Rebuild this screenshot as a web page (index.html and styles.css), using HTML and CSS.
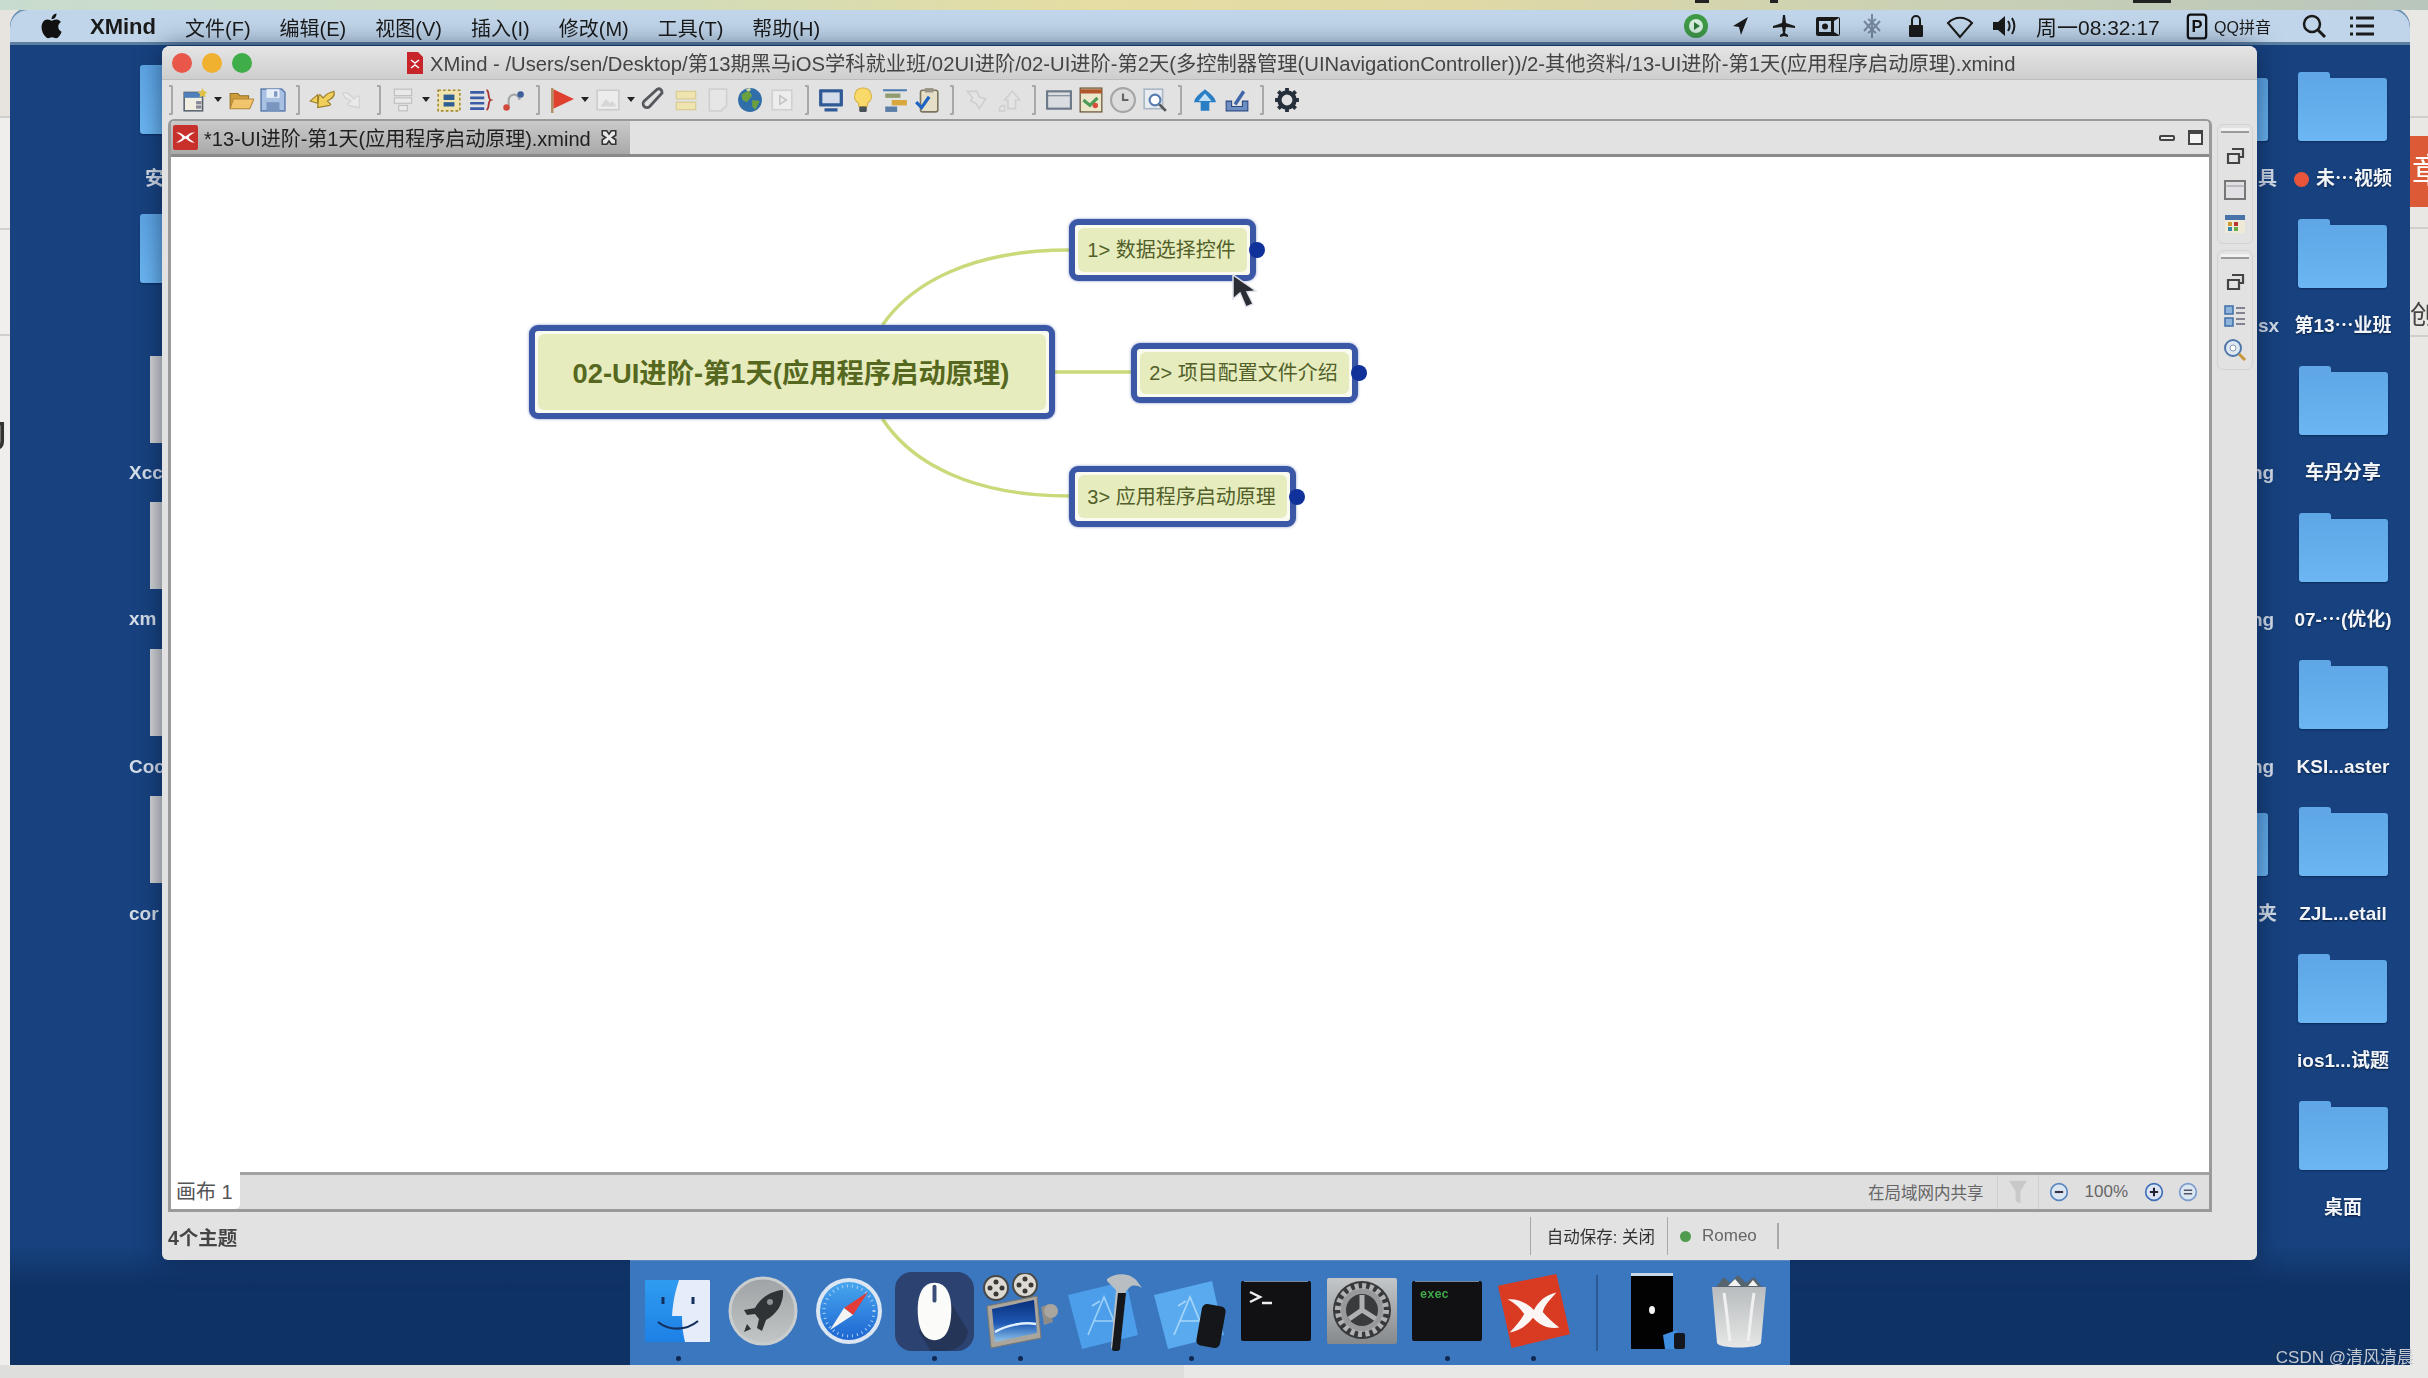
FILE: index.html
```html
<!DOCTYPE html>
<html lang="zh">
<head>
<meta charset="utf-8">
<title>XMind</title>
<link rel="stylesheet" href="styles.css">
</head>
<body>
<div class="frame">
  <div class="topstrip"><i class="blob b1"></i><i class="blob b2"></i><i class="blob b3"></i></div>
  <div class="midrow">
    <aside class="leftstrip"><span class="leftglyph">J</span></aside>
    <main class="screen">
      <header class="menubar">
        <svg class="apple" viewBox="0 0 24 24"><path fill="#111" d="M17.05 12.54c-.03-2.5 2.04-3.7 2.13-3.76-1.16-1.7-2.97-1.93-3.61-1.96-1.54-.16-3 .9-3.78.9-.78 0-1.98-.88-3.25-.86-1.67.03-3.21.97-4.07 2.47-1.74 3.01-.44 7.47 1.25 9.92.83 1.2 1.81 2.54 3.1 2.49 1.25-.05 1.72-.8 3.22-.8 1.5 0 1.93.8 3.25.78 1.34-.03 2.19-1.22 3.01-2.42.95-1.39 1.34-2.73 1.36-2.8-.03-.01-2.61-1-2.64-3.97zM14.58 5.2c.68-.83 1.14-1.98 1.02-3.13-.98.04-2.18.66-2.88 1.48-.63.73-1.19 1.9-1.04 3.03 1.1.08 2.22-.56 2.9-1.38z"/></svg>
        <b class="appname">XMind</b>
        <nav class="menus"><span>文件(F)</span><span>编辑(E)</span><span>视图(V)</span><span>插入(I)</span><span>修改(M)</span><span>工具(T)</span><span>帮助(H)</span></nav>
        <div class="tray">
          <svg class="ti" viewBox="0 0 28 28"><circle cx="14" cy="14" r="12" fill="#3f9a45"/><circle cx="14" cy="14" r="7" fill="#d8efe0"/><path d="M12 10l6 4-6 4z" fill="#2d7a38"/></svg>
          <svg class="ti" viewBox="0 0 28 28"><path d="M22 5L7 14l6 1 2 8z" fill="#1a1a1a"/></svg>
          <svg class="ti" viewBox="0 0 28 28"><path d="M13 3h2l1 8 9 3v2l-9-1-1 6 3 2v2l-4-1-4 1v-2l3-2-1-6-9 1v-2l9-3z" fill="#1a1a1a"/></svg>
          <svg class="ti" viewBox="0 0 28 28"><rect x="2" y="5" width="24" height="19" rx="2" fill="#1a1a1a"/><rect x="5" y="9" width="12" height="11" fill="#c0d5e9"/><circle cx="11" cy="14.500" r="3" fill="#1a1a1a"/><path d="M20 9l5-3v17l-5-3z" fill="#c0d5e9"/></svg>
          <svg class="ti" viewBox="0 0 28 28"><path d="M14 2v24M6 9l8 9-4 3M22 9l-8 9 4 3M6 19l8-9-4-3M22 19l-8-9 4-3" fill="none" stroke="#75899c" stroke-width="2"/></svg>
          <svg class="ti" viewBox="0 0 28 28"><path d="M10 13V8a4 4 0 018 0v5" fill="none" stroke="#1a1a1a" stroke-width="2"/><rect x="7" y="13" width="14" height="12" rx="1" fill="#1a1a1a"/></svg>
          <svg class="ti" viewBox="0 0 28 28"><path d="M14 25L2 11c7-7 17-7 24 0z" fill="none" stroke="#1a1a1a" stroke-width="2"/></svg>
          <svg class="ti" viewBox="0 0 28 28"><path d="M3 10h5l7-6v20l-7-6H3z" fill="#1a1a1a"/><path d="M18 9c2 3 2 7 0 10M22 6c3 5 3 11 0 16" fill="none" stroke="#1a1a1a" stroke-width="2"/></svg>
          <span class="clock">周一08:32:17</span>
          <svg class="ti ime" viewBox="0 0 24 28"><rect x="2" y="1" width="20" height="26" rx="3" fill="none" stroke="#111" stroke-width="2.500"/><text x="12" y="20" class="imeletter">P</text></svg>
          <span class="imename">QQ拼音</span>
          <svg class="ti search" viewBox="0 0 28 28"><circle cx="12" cy="12" r="8" fill="none" stroke="#1a1a1a" stroke-width="2.500"/><path d="M18 18l7 7" stroke="#1a1a1a" stroke-width="3"/></svg>
          <svg class="ti list" viewBox="0 0 28 28"><path d="M8 6h18M8 14h18M8 22h18" stroke="#1a1a1a" stroke-width="3"/><path d="M2 6h3M2 14h3M2 22h3" stroke="#1a1a1a" stroke-width="3"/></svg>
        </div>
      </header>

      <section class="desktop">
        <div class="deskicon" style="--x:130px;--y:20px"><i class="folder"></i></div>
        <div class="deskicon" style="--x:130px;--y:169px"><i class="folder"></i></div>
        <div class="paper" style="--x:140px;--y:311px"></div>
        <div class="paper" style="--x:140px;--y:457px"></div>
        <div class="paper" style="--x:140px;--y:604px"></div>
        <div class="paper" style="--x:140px;--y:751px"></div>
        <span class="stub" style="--x:135px;--y:122px">安</span>
        <span class="stub" style="--x:119px;--y:416px">Xcc</span>
        <span class="stub" style="--x:119px;--y:562px">xm</span>
        <span class="stub" style="--x:119px;--y:710px">Coc</span>
        <span class="stub" style="--x:119px;--y:857px">cor</span>

        <div class="deskicon" style="--x:2169px;--y:27px"><i class="folder"></i></div>
        <div class="deskicon" style="--x:2169px;--y:762px"><i class="folder"></i></div>
        <span class="stub" style="--x:2248px;--y:122px">具</span>
        <span class="stub" style="--x:2248px;--y:269px">sx</span>
        <span class="stub" style="--x:2241px;--y:416px">ng</span>
        <span class="stub" style="--x:2241px;--y:563px">ng</span>
        <span class="stub" style="--x:2241px;--y:710px">ng</span>
        <span class="stub" style="--x:2248px;--y:857px">夹</span>

        <div class="foldercol">
          <div class="fitem"><i class="folder"></i><span class="flabel"><i class="reddot"></i>未⋯视频</span></div>
          <div class="fitem"><i class="folder"></i><span class="flabel">第13⋯业班</span></div>
          <div class="fitem"><i class="folder"></i><span class="flabel">车丹分享</span></div>
          <div class="fitem"><i class="folder"></i><span class="flabel">07-⋯(优化)</span></div>
          <div class="fitem"><i class="folder"></i><span class="flabel">KSI...aster</span></div>
          <div class="fitem"><i class="folder"></i><span class="flabel">ZJL...etail</span></div>
          <div class="fitem"><i class="folder"></i><span class="flabel">ios1...试题</span></div>
          <div class="fitem"><i class="folder"></i><span class="flabel">桌面</span></div>
        </div>

        <article class="window">
          <div class="titlebar">
            <span class="lights"><i class="light red"></i><i class="light yellow"></i><i class="light green"></i></span>
            <svg class="docicon" viewBox="0 0 18 24"><path d="M1 1h11l5 5v17H1z" fill="#c8252a"/><path d="M5 9l4 3 4-3M5 17l4-3 4 3" stroke="#fff" stroke-width="1.500" fill="none"/></svg>
            <span class="titletext">XMind - /Users/sen/Desktop/第13期黑马iOS学科就业班/02UI进阶/02-UI进阶-第2天(多控制器管理(UINavigationController))/2-其他资料/13-UI进阶-第1天(应用程序启动原理).xmind</span>
          </div>

          <div class="toolbar">
            <i class="sep"></i>
            <span class="tb"><svg viewBox="0 0 24 24"><rect x="2" y="5" width="17" height="17" fill="#f0eee0" stroke="#55606c" stroke-width="1.400"/><rect x="2" y="5" width="17" height="5" fill="#4f80bc"/><rect x="13" y="13" width="5" height="3" fill="#889"/><rect x="13" y="17" width="5" height="3" fill="#889"/><path d="M19 1l1.500 3 3 .5-2.200 2.200.5 3-2.800-1.500-2.800 1.500.5-3-2.200-2.200 3-.5z" fill="#e0c24a"/></svg></span><i class="ar"></i>
            <span class="tb"><svg viewBox="0 0 24 24"><path d="M2 6h7l2 2h8v11H2z" fill="#cf9c3a" stroke="#93702a"/><path d="M5 11h19l-4 9H2z" fill="#f2c46c" stroke="#b5883a"/></svg></span>
            <span class="tb"><svg viewBox="0 0 24 24"><path d="M1 2h19l3 3v17H1z" fill="#a8c0e2" stroke="#6684b4" stroke-width="1.500"/><rect x="6" y="2" width="12" height="8" fill="#e8eef8"/><rect x="6" y="14" width="12" height="8" fill="#7a96c0"/><rect x="13" y="4" width="3" height="5" fill="#7a96c0"/></svg></span>
            <i class="sep"></i>
            <span class="tb"><svg viewBox="0 0 24 24"><path d="M23 3c-2 1-5 1-7 3l-3 3-3-3-1 1-1 11 11-2 1-1-3-3 3-2c3-2 4-4 3-7z" fill="#f0cf5a" stroke="#9c7f2a" stroke-width="1.100" transform="matrix(1 0 0 1 0 1)"/><path d="M1 13l7-6v8z" fill="#f0cf5a" stroke="#9c7f2a"/></svg></span>
            <span class="tb off"><svg viewBox="0 0 24 24"><path d="M2 5c3 0 5 1 7 3l3 3 3-3 2 1 0 10-10-2-1-1 3-3-3-2C3 10 2 8 2 5z" fill="#e9e9e9" stroke="#d2d2d2" stroke-width="1.200"/></svg></span>
            <i class="sep"></i>
            <span class="tb off"><svg viewBox="0 0 24 24"><rect x="4" y="2" width="16" height="6" fill="#e9e9e9" stroke="#bcbcbc"/><rect x="4" y="10" width="16" height="5" fill="#e9e9e9" stroke="#bcbcbc"/><rect x="8" y="17" width="8" height="5" fill="#e9e9e9" stroke="#bcbcbc"/></svg></span><i class="ar"></i>
            <span class="tb"><svg viewBox="0 0 24 24"><rect x="2" y="3" width="20" height="19" fill="#f0e3ae" stroke="#a58b30" stroke-width="1.500" stroke-dasharray="2.500 2"/><rect x="7" y="7" width="10" height="5" fill="#2f5e92"/><rect x="7" y="14" width="10" height="4" fill="#2f5e92"/></svg></span>
            <span class="tb"><svg viewBox="0 0 24 24"><path d="M2 5h13M2 10h13M2 15h13M2 20h13" stroke="#3a5ca8" stroke-width="2.500"/><path d="M17 3c3 0 1 8 4 9-3 1-1 9-4 9" fill="none" stroke="#a33" stroke-width="1.700"/></svg></span>
            <span class="tb"><svg viewBox="0 0 24 24"><path d="M8 20V12a5 5 0 0110 0" fill="none" stroke="#a5a8aa" stroke-width="2"/><circle cx="6" cy="19" r="3" fill="#d24a3c"/><circle cx="19" cy="7" r="3" fill="#3f5f98"/></svg></span>
            <i class="sep"></i>
            <span class="tb"><svg viewBox="0 0 24 24"><path d="M4 2l19 9-19 9z" fill="#e0412e"/><path d="M3 1v23" stroke="#b08a62" stroke-width="2.200"/></svg></span><i class="ar"></i>
            <span class="tb off"><svg viewBox="0 0 24 24"><rect x="2" y="3" width="20" height="18" fill="#ececec" stroke="#cdcdcd" stroke-width="1.500"/><path d="M5 18l5-7 4 4 2-2 4 5z" fill="#d6d6d6"/></svg></span><i class="ar"></i>
            <span class="tb"><svg viewBox="0 0 24 24"><path d="M20 5L8 18a3.500 3.500 0 01-5-5L15 2a3 3 0 014 4L8 18" fill="none" stroke="#55585c" stroke-width="2.600"/></svg></span>
            <span class="tb off"><svg viewBox="0 0 24 24"><rect x="3" y="4" width="18" height="7" fill="#efe3b0" stroke="#d9c98e"/><rect x="3" y="14" width="18" height="7" fill="#efe3b0" stroke="#d9c98e"/></svg></span>
            <span class="tb off"><svg viewBox="0 0 24 24"><path d="M4 2h16v15l-5 5H4z" fill="#e6e6e6" stroke="#d0d0d0" stroke-width="1.500"/></svg></span>
            <span class="tb"><svg viewBox="0 0 24 24"><circle cx="12" cy="12" r="11" fill="#2f6ea8"/><path d="M4 7l7-4 3 5-5 6-4-2zM14 12l7 1-4 8-3-3z" fill="#6aa040"/><path d="M8 2l4-1 1 2-3 1z" fill="#d8d9a8"/></svg></span>
            <span class="tb off"><svg viewBox="0 0 24 24"><rect x="3" y="3" width="18" height="18" fill="#ededed" stroke="#d0d0d0" stroke-width="1.500"/><path d="M10 8l6 4-6 4z" fill="none" stroke="#c4c4c4" stroke-width="1.500"/></svg></span>
            <i class="sep"></i>
            <span class="tb"><svg viewBox="0 0 24 24"><rect x="1" y="2" width="22" height="16" rx="1" fill="#2f5a96"/><rect x="4" y="5" width="16" height="10" fill="#d4dcea"/><path d="M6 21h12" stroke="#2f5a96" stroke-width="3"/></svg></span>
            <span class="tb"><svg viewBox="0 0 24 24"><path d="M12 1a7.500 7.500 0 00-4 14v3h8v-3a7.500 7.500 0 00-4-14z" fill="#f8d96a" stroke="#d6b24c"/><rect x="8.500" y="18" width="7" height="5" rx="1" fill="#4a5058"/></svg></span>
            <span class="tb"><svg viewBox="0 0 24 24"><path d="M1 3h22" stroke="#4a7ab0" stroke-width="2"/><rect x="3" y="6" width="14" height="4" fill="#8f9c70"/><rect x="9" y="12" width="14" height="5" fill="#d8a83c"/><rect x="3" y="18" width="11" height="5" fill="#5a7ea8"/></svg></span>
            <span class="tb"><svg viewBox="0 0 24 24"><rect x="6" y="3" width="16" height="20" rx="2" fill="#e6dfc8" stroke="#7c7660" stroke-width="1.500"/><rect x="10" y="1" width="8" height="4" fill="#999384"/><path d="M2 14l5 5 7-10" fill="none" stroke="#1d64c4" stroke-width="3"/></svg></span>
            <i class="sep wide"></i>
            <span class="tb off"><svg viewBox="0 0 24 24"><path d="M3 4h9l2 5 6 2-6 9-3-5-5-2 2-3z" fill="#e4e4e4" stroke="#cfcfcf" stroke-width="1.500"/></svg></span>
            <span class="tb off"><svg viewBox="0 0 24 24"><path d="M15 4l7 8h-4v8h-7v-8H8zM3 22c0-3 2-5 5-5v5z" fill="#e4e4e4" stroke="#cfcfcf" stroke-width="1.500"/></svg></span>
            <i class="sep wide"></i>
            <span class="tb"><svg viewBox="0 0 24 24"><rect x="1" y="4" width="22" height="16" fill="#d9dde2" stroke="#6c7a8a" stroke-width="2"/><path d="M1 8h22" stroke="#6c7a8a"/></svg></span>
            <span class="tb"><svg viewBox="0 0 24 24"><rect x="2" y="1" width="20" height="22" fill="#ece6cc" stroke="#6b5c3c" stroke-width="1.200"/><path d="M2 4h20" stroke="#b2562c" stroke-width="4"/><path d="M5 12l6 5 7-7" fill="none" stroke="#4f9c58" stroke-width="3"/><circle cx="16" cy="17" r="2.500" fill="#d94c3c"/></svg></span>
            <span class="tb"><svg viewBox="0 0 24 24"><circle cx="12" cy="12" r="11" fill="#dcdcdc" stroke="#a5a5a5" stroke-width="2"/><path d="M12 6v6h5" fill="none" stroke="#666" stroke-width="2"/></svg></span>
            <span class="tb"><svg viewBox="0 0 24 24"><rect x="2" y="2" width="17" height="18" fill="#e8edf4" stroke="#aab6c4" stroke-width="1.500"/><circle cx="12" cy="12" r="5" fill="#fff" stroke="#5a7eae" stroke-width="2"/><path d="M16 16l6 6" stroke="#555" stroke-width="2.500"/></svg></span>
            <i class="sep wide"></i>
            <span class="tb"><svg viewBox="0 0 24 24"><path d="M12 2C7 6 2 10 2 14h6v8h8v-8h6c0-4-5-8-10-12z" fill="#2a7fc4"/><path d="M12 6l-6 7h12z" fill="#bfe0f5"/></svg></span>
            <span class="tb"><svg viewBox="0 0 24 24"><path d="M2 13v9h20v-9h-5v5H7v-5z" fill="#6d8ec0" stroke="#2c4a82"/><path d="M9 15l8-12 2.500 2-8 12z" fill="#3f66a8"/></svg></span>
            <i class="sep wide"></i>
            <span class="tb"><svg viewBox="0 0 24 24"><circle cx="12" cy="12" r="7" fill="none" stroke="#26303c" stroke-width="4"/><path d="M12 1v4M12 19v4M1 12h4M19 12h4M4 4l3 3M17 17l3 3M20 4l-3 3M7 17l-3 3" stroke="#26303c" stroke-width="3.500"/></svg></span>
          </div>

          <div class="workarea">
            <div class="editor">
              <div class="tabbar">
                <div class="tab">
                  <svg class="tabicon" viewBox="0 0 24 24"><rect width="24" height="24" rx="2" fill="#c8302c"/><path d="M3 7c5 0 7 3 9 4 2-1 4-4 9-4-3 2-5 3-6 5 1 2 3 3 6 5-5 0-7-3-9-4-2 1-4 4-9 4 3-2 5-3 6-5-1-2-3-3-6-5z" fill="#fff"/></svg>
                  <span class="tabtitle">*13-UI进阶-第1天(应用程序启动原理).xmind</span>
                  <svg class="tabclose" viewBox="0 0 16 16"><path d="M2 2h4l2 3 2-3h4v4l-3 2 3 2v4h-4l-2-3-2 3H2v-4l3-2-3-2z" fill="#e8e8e8" stroke="#333" stroke-width="1.400"/></svg>
                </div>
                <div class="tabctrls">
                  <i class="minbtn"></i><i class="maxbtn"></i>
                </div>
              </div>

              <div class="canvas">
                <svg class="links" viewBox="0 0 2037 1015"><path d="M711 168C740 126 800 93 898 93M711 262C740 306 800 339 898 339M882 215H962" fill="none" stroke="#cbd97a" stroke-width="3.500"/></svg>
                <div class="topic root" style="--x:358px;--y:168px;--w:526px;--h:94px"><span>02-UI进阶-第1天(应用程序启动原理)</span></div>
                <div class="topic" style="--x:898px;--y:62px;--w:187px;--h:62px"><span>1&gt; 数据选择控件</span><i class="knob"></i></div>
                <div class="topic" style="--x:960px;--y:186px;--w:227px;--h:60px"><span>2&gt; 项目配置文件介绍</span><i class="knob"></i></div>
                <div class="topic" style="--x:898px;--y:309px;--w:227px;--h:61px"><span>3&gt; 应用程序启动原理</span><i class="knob"></i></div>
                <svg class="cursor" viewBox="0 0 30 40"><path d="M3 2l0 24 7-6 6 14 7-3-6-12 9-1z" fill="#2a2d33" stroke="#dfe3ea" stroke-width="1.500"/></svg>
              </div>

              <div class="sheetbar">
                <span class="sheettab">画布 1</span>
                <div class="sheetright">
                  <span class="share">在局域网内共享</span>
                  <span class="filtercell"><svg viewBox="0 0 24 32"><path d="M1 2h22l-8 13v15l-6-3V15z" fill="#c9c9c9"/></svg></span>
                  <svg class="zoomic" viewBox="0 0 24 24"><circle cx="12" cy="12" r="10" fill="#dce6f2" stroke="#5a86c0" stroke-width="2"/><path d="M7 12h10" stroke="#334" stroke-width="2.500"/></svg>
                  <span class="pct">100%</span>
                  <svg class="zoomic" viewBox="0 0 24 24"><circle cx="12" cy="12" r="10" fill="#dce6f2" stroke="#3f6fb8" stroke-width="2"/><path d="M7 12h10M12 7v10" stroke="#223" stroke-width="2.500"/></svg>
                  <svg class="zoomic" viewBox="0 0 24 24"><circle cx="12" cy="12" r="10" fill="#dce6f2" stroke="#7a9ccc" stroke-width="2"/><path d="M7 10h10M7 14h10" stroke="#556" stroke-width="1.800"/></svg>
                </div>
              </div>
            </div>

            <div class="sidetrim">
              <div class="trimgroup">
                <i class="grip"></i>
                <svg viewBox="0 0 24 22"><path d="M9 4h11v8h-4M5 9h11v9H5z" fill="none" stroke="#444" stroke-width="2.200"/></svg>
                <svg viewBox="0 0 24 22"><rect x="2" y="2" width="20" height="18" fill="#dfdfe4" stroke="#777" stroke-width="2"/><path d="M2 7h20" stroke="#999"/></svg>
                <svg viewBox="0 0 24 22"><rect x="2" y="2" width="20" height="18" fill="#efe9d8"/><rect x="2" y="2" width="20" height="5" fill="#4873a8"/><rect x="5" y="9" width="4" height="4" fill="#c93"/><rect x="11" y="9" width="4" height="4" fill="#b33"/><rect x="5" y="14" width="4" height="4" fill="#38a"/><rect x="11" y="14" width="4" height="4" fill="#6a4"/></svg>
              </div>
              <div class="trimgroup">
                <i class="grip"></i>
                <svg viewBox="0 0 24 22"><path d="M9 4h11v8h-4M5 9h11v9H5z" fill="none" stroke="#444" stroke-width="2.200"/></svg>
                <svg viewBox="0 0 24 22"><rect x="2" y="1" width="8" height="8" fill="#8fb4dc" stroke="#3f6fa8" stroke-width="1.500"/><rect x="2" y="13" width="8" height="8" fill="#8fb4dc" stroke="#3f6fa8" stroke-width="1.500"/><path d="M13 3h9M13 8h9M13 14h9M13 19h9" stroke="#667" stroke-width="1.500"/></svg>
                <svg viewBox="0 0 24 22"><circle cx="10" cy="9" r="8" fill="#dde8f3" stroke="#4f77a8" stroke-width="2"/><circle cx="10" cy="9" r="3" fill="#fff" stroke="#89a"/><path d="M16 15l6 6" stroke="#c9963c" stroke-width="3"/></svg>
              </div>
            </div>
          </div>

          <footer class="statusbar">
            <span class="topics">4个主题</span>
            <div class="statusright">
              <span class="autosave">自动保存: 关闭</span>
              <span class="romeo"><i class="gdot"></i>Romeo</span>
              <i class="endmark"></i>
            </div>
          </footer>
        </article>

        <div class="dock">
          <div class="slot on"><svg class="d-finder" viewBox="0 0 65 62"><defs><linearGradient id="fb" x1="0" y1="0" x2="0" y2="1"><stop offset="0" stop-color="#2f9cf0"/><stop offset="1" stop-color="#1d80e6"/></linearGradient></defs><rect width="65" height="62" rx="1" fill="#e4edf9"/><path d="M0 0h34c-4 12-6 22-7 36h10c0 10 1 18 3 26H0z" fill="url(#fb)"/><path d="M13 42c11 9 28 9 40-1" fill="none" stroke="#15305e" stroke-width="2.200"/><path d="M18 17v7M48 17v7" stroke="#15305e" stroke-width="3"/></svg></div>
          <div class="slot"><svg class="d-round" viewBox="0 0 70 72"><defs><linearGradient id="rk" x1="0" y1="0" x2="0" y2="1"><stop offset="0" stop-color="#9fa3a5"/><stop offset="1" stop-color="#c3c6c6"/></linearGradient></defs><circle cx="35" cy="36" r="33" fill="url(#rk)" stroke="#c9cdce" stroke-width="3"/><path d="M55 15c-14 1-24 10-28 18l-11 2 3 5 8-1 4 5-2 9 5 3 4-11c11-6 18-17 17-30z" fill="#2f3336"/><circle cx="42" cy="27" r="3" fill="#8d9193"/><path d="M19 49l-3 8 7-3z" fill="#2f3336"/></svg></div>
          <div class="slot"><svg class="d-round" viewBox="0 0 70 72"><defs><linearGradient id="sf" x1="0" y1="0" x2="0" y2="1"><stop offset="0" stop-color="#48a6ee"/><stop offset="1" stop-color="#1d66d2"/></linearGradient></defs><circle cx="35" cy="36" r="33" fill="#dbe6f2"/><circle cx="35" cy="36" r="29" fill="url(#sf)"/><circle cx="35" cy="36" r="25" fill="none" stroke="#a9d0f4" stroke-width="3" stroke-dasharray="1 4"/><path d="M54 17L30 33l9 7z" fill="#e43c36"/><path d="M16 55l14-22 9 7z" fill="#f4f4f4"/></svg></div>
          <div class="slot on"><svg class="d-mouse" viewBox="0 0 80 80"><rect width="80" height="80" rx="17" fill="#2c4270"/><path d="M56 30L74 60c-2 12-10 20-24 20H36L24 60z" fill="#243558"/><path d="M40 11c12 0 17 12 17 27 0 20-6 31-17 31S23 58 23 38c0-15 5-27 17-27z" fill="#fbfbf9"/><path d="M40 15v14" stroke="#3a4e78" stroke-width="4" stroke-linecap="round"/></svg></div>
          <div class="slot on"><svg class="d-movie" viewBox="0 0 78 76"><defs><linearGradient id="mv" x1="0" y1="0" x2="0" y2="1"><stop offset="0" stop-color="#0a2f78"/><stop offset=".55" stop-color="#1d58b4"/><stop offset="1" stop-color="#8fc4ec"/></linearGradient></defs><circle cx="15" cy="15" r="12" fill="#dcdad2" stroke="#4a4844" stroke-width="2"/><circle cx="44" cy="12" r="12" fill="#dcdad2" stroke="#4a4844" stroke-width="2"/><g fill="#3a3834"><circle cx="15" cy="9" r="2.500"/><circle cx="15" cy="21" r="2.500"/><circle cx="9" cy="15" r="2.500"/><circle cx="21" cy="15" r="2.500"/><circle cx="44" cy="6" r="2.500"/><circle cx="44" cy="18" r="2.500"/><circle cx="38" cy="12" r="2.500"/><circle cx="50" cy="12" r="2.500"/></g><path d="M6 33l50-10 4 42-50 10z" fill="#aaa69e" stroke="#7a766e"/><path d="M11 36l42-9 3 33-42 9z" fill="url(#mv)"/><path d="M14 59c12-7 28-10 41-8" fill="none" stroke="#e0f0ff" stroke-width="2.500"/><path d="M60 34l8-3 4 18-9 3z" fill="#8e8c86"/><circle cx="70" cy="38" r="7" fill="#a8a69e"/></svg></div>
          <div class="slot"><svg class="d-xcode" viewBox="0 0 78 80"><path d="M2 24l58-14 12 54-56 14z" fill="#4d9eea"/><path d="M22 64L38 26l14 34M27 50h26M34 30l-8 5" fill="none" stroke="#9cd0f8" stroke-width="1.700"/><path d="M41 8c8-6 22-7 30 2l5 7c-5-3-9-3-12-1l-4 4-6 56c-1 4-9 4-9 0l5-57-9-9z" fill="#b9bec2"/><path d="M52 22h8l-6 56c-1 3-8 3-8 0z" fill="#14171b"/></svg></div>
          <div class="slot on"><svg class="d-xcode" viewBox="0 0 78 80"><path d="M2 24l58-14 12 54-56 14z" fill="#5aaaf0"/><path d="M22 64L38 26l14 34M27 50h26M34 30l-8 5" fill="none" stroke="#a5d6fa" stroke-width="1.700"/><rect x="47" y="34" width="24" height="42" rx="5" fill="#15161a" transform="rotate(10 59 55)"/></svg></div>
          <div class="slot"><svg class="d-term" viewBox="0 0 70 60"><rect width="70" height="60" rx="2" fill="#111012"/><path d="M3 0h64" stroke="#76889e" stroke-width="2"/><path d="M9 11l10 5-10 5" fill="none" stroke="#eee" stroke-width="2.500"/><path d="M21 22h10" stroke="#eee" stroke-width="2.500"/></svg></div>
          <div class="slot"><svg class="d-prefs" viewBox="0 0 70 66"><defs><linearGradient id="pf" x1="0" y1="0" x2="0" y2="1"><stop offset="0" stop-color="#c4c7c9"/><stop offset="1" stop-color="#85898c"/></linearGradient></defs><rect width="70" height="66" rx="2" fill="url(#pf)"/><circle cx="35" cy="32" r="29" fill="#38393b"/><circle cx="35" cy="32" r="22" fill="#97999b"/><circle cx="35" cy="32" r="24" fill="none" stroke="#b0b2b4" stroke-width="6" stroke-dasharray="4 3.500"/><circle cx="35" cy="32" r="16" fill="#3a3b3d"/><path d="M35 17v15l14 9M35 32l-13 9" stroke="#aeb0b2" stroke-width="5" fill="none"/></svg></div>
          <div class="slot on"><svg class="d-term" viewBox="0 0 70 60"><rect width="70" height="60" rx="2" fill="#111012"/><path d="M3 0h64" stroke="#76889e" stroke-width="2"/><text x="8" y="17" class="execlabel">exec</text></svg></div>
          <div class="slot on"><svg class="d-xmind" viewBox="0 0 76 76"><path d="M2 12L62 0l14 62-60 14z" fill="#d93a22"/><path d="M12 26c12-1 21 5 27 11 5-9 11-15 23-18-5 6-12 12-14 20 5 6 11 11 17 16-12 2-21-3-27-10-6 7-12 13-24 15 6-6 11-12 15-19-4-6-10-11-17-15z" fill="#fbf6f4"/></svg></div>
          <i class="dockdivider"></i>
          <div class="slot"><svg class="d-doc" viewBox="0 0 56 76"><rect width="42" height="76" fill="#020202"/><rect width="42" height="3" fill="#c7d8ec"/><ellipse cx="21" cy="37" rx="3" ry="4" fill="#f4f4f4"/><path d="M32 62l14-5 3 19H34z" fill="#3f8ee0"/><rect x="43" y="60" width="11" height="16" rx="2" fill="#14181e"/></svg></div>
          <div class="slot"><svg class="d-trash" viewBox="0 0 58 76"><defs><linearGradient id="tr" x1="0" y1="0" x2="0" y2="1"><stop offset="0" stop-color="#b8bcbe"/><stop offset="1" stop-color="#e6e7e6"/></linearGradient></defs><path d="M2 14h54l-5 56c-2 6-42 6-44 0z" fill="url(#tr)"/><path d="M14 20c4 26 4 36 6 48M44 20c-4 26-4 36-6 48" stroke="#f1f1f1" stroke-width="3" fill="none"/><path d="M6 14l8-10 6 6 8-8 8 8 8-6 8 10z" fill="#56646e"/><path d="M18 13l7-7 6 7zM38 13l5-6 5 6z" fill="#f2f2f2"/></svg></div>
        </div>
      </section>
    </main>
    <aside class="rightstrip">
      <span class="rline l1"></span><span class="orange">章</span><span class="rline l2"></span><span class="rglyph">创</span><span class="rline l3"></span>
    </aside>
  </div>
  <div class="bottomstrip"></div>
  <span class="watermark">CSDN @清风清晨</span>
</div>
</body>
</html>
```

FILE: styles.css
```css
* { box-sizing: border-box; }
html, body { margin: 0; padding: 0; }
body {
  width: 2428px;
  height: 1378px;
  overflow: hidden;
  background: #e8e6e3;
  font-family: "Liberation Sans", "Noto Sans CJK SC", sans-serif;
  color: #222;
}
.frame {
  position: relative;
  width: 2428px;
  height: 1378px;
  display: flex;
  flex-direction: column;
  filter: blur(0.6px);
}
.topstrip {
  position: relative;
  height: 10px;
  flex: none;
  background: linear-gradient(90deg, #c8dccf 0%, #d3dcb8 28%, #e5dda2 45%, #e0d9a6 60%, #c9d0b4 80%, #b9c6bc 100%);
}
.blob { position: absolute; top: 0; height: 3px; background: #222; }
.b1 { left: 1695px; width: 14px; }
.b2 { left: 1770px; width: 8px; }
.b3 { left: 2133px; width: 38px; }
.midrow { flex: 1; display: flex; min-height: 0; }
.leftstrip {
  position: relative;
  flex: none;
  width: 10px;
  background: linear-gradient(#e7e4df 0 106px, #cfcfcd 106px 108px, #efeeec 108px 218px, #d0d0ce 218px 220px, #f0efed 220px 324px, #cfcfcd 324px 326px, #efeeec 326px);
  overflow: hidden;
}
.leftglyph { position: absolute; left: -13px; top: 404px; font-size: 40px; color: #333; }
.rightstrip {
  position: relative;
  flex: none;
  width: 18px;
  background: #eae8e5;
  overflow: hidden;
}
.rline { position: absolute; left: 0; right: 0; height: 2px; background: #cfcfcd; }
.l1 { top: 106px; }
.l2 { top: 217px; }
.l3 { top: 325px; }
.orange {
  position: absolute; left: 0; top: 126px; width: 18px; height: 71px;
  background: #dc5b36; color: #fff; font-size: 34px; line-height: 71px; white-space: nowrap; text-indent: 2px; overflow: hidden;
}
.rglyph { position: absolute; left: 0; top: 284px; font-size: 26px; color: #444; white-space: nowrap; }
.bottomstrip { flex: none; height: 13px; background: linear-gradient(90deg, #dededd 0 1184px, #e8e8e7 1184px); }
.watermark {
  position: absolute; right: 14px; bottom: 8px; font-size: 17px; line-height: 24px; color: #c3c8d0;
  white-space: nowrap;
}

.screen {
  flex: 1;
  min-width: 0;
  display: flex;
  flex-direction: column;
  border-radius: 18px 18px 0 0;
  overflow: hidden;
  background: #17427f;
  box-shadow: 0 -2px 0 0 #6b93b4;
}
.menubar {
  flex: none;
  height: 35px;
  display: flex;
  align-items: center;
  padding-top: 2px;
  background: #c0d5e9;
  border-bottom: 3px solid #5d80a2;
  font-size: 20px;
  color: #1a1a1a;
  white-space: nowrap;
}
.apple { width: 30px; height: 30px; margin-left: 27px; margin-top: -2px; flex: none; }
.appname { margin-left: 23px; font-size: 22px; }
.menus { display: flex; margin-left: 29px; }
.menus span { margin-right: 29px; }
.tray { margin-left: auto; display: flex; align-items: center; padding-right: 34px; margin-top: -2px; }
.ti { width: 28px; height: 28px; flex: none; margin-right: 16px; }
.clock { margin-left: 2px; font-size: 21px; width: 130px; }
.ime { width: 22px; height: 27px; margin-left: 20px; margin-right: 6px; }
.imeletter { font: bold 18px "Liberation Sans", sans-serif; text-anchor: middle; fill: #111; }
.imename { font-size: 16px; width: 62px; }
.search { margin-left: 24px; margin-right: 20px; }
.list { margin-right: 0; }

.desktop {
  position: relative;
  flex: 1;
  min-height: 0;
  background: linear-gradient(#17427f 0 1200px, #0f3264 1240px);
}
.folder {
  display: block;
  position: relative;
  width: 89px;
  height: 63px;
  margin-top: 6px;
  border-radius: 3px;
  background: linear-gradient(#5fa7e6, #6bb6f3);
  box-shadow: 0 1px 2px #0d2c5c;
}
.folder::before {
  content: "";
  position: absolute;
  left: 0;
  top: -6px;
  width: 32px;
  height: 8px;
  border-radius: 3px 3px 0 0;
  background: #5fa7e6;
}
.deskicon { position: absolute; left: var(--x); top: var(--y); }
.paper {
  position: absolute; left: var(--x); top: var(--y); width: 40px; height: 87px;
  background: linear-gradient(90deg, #d8d8d8, #bcbcbc);
}
.stub { position: absolute; left: var(--x); top: var(--y); font-size: 19px; line-height: 24px; font-weight: 700; color: #d5dde8; white-space: nowrap; }
.foldercol {
  position: absolute;
  left: 2263px;
  top: 27px;
  width: 140px;
  display: flex;
  flex-direction: column;
  align-items: center;
}
.fitem { height: 147px; display: flex; flex-direction: column; align-items: center; }
.flabel {
  margin-top: 26px;
  display: flex;
  align-items: center;
  font-size: 19px;
  line-height: 24px;
  font-weight: 700;
  color: #f1f4f8;
  text-shadow: 0 1px 2px #0a1d3c;
  white-space: nowrap;
}
.reddot { width: 15px; height: 15px; border-radius: 50%; background: #e8553a; margin-right: 7px; }

.window {
  position: absolute;
  left: 152px;
  top: 1px;
  width: 2095px;
  height: 1214px;
  display: flex;
  flex-direction: column;
  background: #e3e2e3;
  border-radius: 8px 8px 6px 6px;
  box-shadow: 0 0 26px rgba(5, 20, 50, .55);
  overflow: hidden;
}
.titlebar {
  flex: none;
  height: 34px;
  display: flex;
  align-items: center;
  background: linear-gradient(#e6e5e5, #cfcece);
  border-bottom: 1px solid #bdbcbc;
  font-size: 20.250px;
  color: #444;
  white-space: nowrap;
}
.lights { display: flex; gap: 10px; margin-left: 10px; }
.light { width: 20px; height: 20px; border-radius: 50%; display: block; }
.red { background: #e9564a; }
.yellow { background: #f0b030; }
.green { background: #3fae48; }
.docicon { width: 20px; height: 24px; margin-left: 153px; flex: none; }
.titletext { margin-left: 5px; }
.toolbar {
  flex: none;
  height: 39px;
  display: flex;
  align-items: center;
  background: #e3e2e3;
}
.sep {
  display: block;
  width: 4px;
  height: 30px;
  flex: none;
  margin: 0 6px 0 7px;
  border: 2px solid #a8a8a8;
  border-left: 0;
  border-radius: 0 2px 2px 0;
}
.sep.wide { margin: 0 7px; }
.tb { width: 32px; height: 32px; flex: none; display: flex; align-items: center; justify-content: center; }
.tb svg { width: 26px; height: 26px; }
.ar { width: 14px; flex: none; display: block; position: relative; height: 8px; }
.ar::after {
  content: "";
  position: absolute; left: 3px; top: 1px;
  border: 4px solid transparent; border-top: 5px solid #222; border-bottom: 0;
}

.workarea { flex: 1; min-height: 0; display: flex; padding-left: 6px; }
.editor {
  flex: none;
  width: 2044px;
  display: flex;
  flex-direction: column;
  border-radius: 6px 6px 0 0;
  border: 3px solid #9a9a9a;
  border-top-width: 2px;
  overflow: hidden;
  background: #e3e2e3;
}
.tabbar {
  flex: none;
  height: 36px;
  display: flex;
  align-items: stretch;
  border-bottom: 3px solid #8b8b8b;
  background: #e3e2e3;
}
.tab {
  width: 459px;
  display: flex;
  align-items: center;
  background: linear-gradient(#cbcaca, #aaa9a9);
  font-size: 20px;
  color: #202020;
  white-space: nowrap;
}
.tabicon { width: 25px; height: 25px; margin-left: 2px; flex: none; }
.tabtitle { margin-left: 6px; }
.tabclose { width: 18px; height: 19px; margin-left: 9px; flex: none; }
.tabctrls { margin-left: auto; display: flex; align-items: center; gap: 13px; padding-right: 6px; }
.minbtn { display: block; width: 16px; height: 6px; border: 2px solid #444; border-radius: 2px; background: #eee; }
.maxbtn { display: block; width: 15px; height: 15px; border: 2px solid #444; border-top-width: 4px; background: #f4f4f4; }

.canvas {
  position: relative;
  flex: 1;
  min-height: 0;
  background: #fff;
}
.links { position: absolute; left: 0; top: 0; width: 100%; height: 100%; }
.topic {
  position: absolute;
  left: var(--x);
  top: var(--y);
  width: var(--w);
  height: var(--h);
  display: flex;
  align-items: stretch;
  padding: 3px;
  background: #fafbf0;
  border: 6px solid #3b58a6;
  border-radius: 9px;
  box-shadow: 0 0 3px rgba(59, 88, 166, .6);
  font-size: 20px;
  color: #525f2a;
  white-space: nowrap;
}
.topic span {
  flex: 1;
  display: flex;
  align-items: center;
  justify-content: center;
  padding: 0 2px 3px 0;
  background: #e6ecbd;
  border-radius: 6px;
}
.topic.root { font-size: 27.300px; font-weight: 700; color: #566820; }
.knob {
  position: absolute;
  right: -15px;
  top: 50%;
  width: 16px;
  height: 16px;
  margin-top: -8px;
  border-radius: 50%;
  background: #10309a;
}
.cursor { position: absolute; left: 1059px; top: 116px; width: 30px; height: 40px; }

.sheetbar {
  flex: none;
  height: 37px;
  display: flex;
  align-items: stretch;
  border-top: 3px solid #a2a2a2;
  background: #e0dfe0;
  font-size: 16.500px;
  color: #666;
  white-space: nowrap;
}
.sheettab {
  width: 69px;
  margin-top: -3px;
  padding-left: 5px;
  display: flex;
  align-items: center;
  background: #fff;
  border-radius: 0 0 5px 0;
  font-size: 20px;
  color: #555;
}
.sheetright { margin-left: auto; display: flex; align-items: center; padding-right: 11px; }
.share { margin-right: 13px; }
.filtercell {
  width: 42px;
  height: 100%;
  display: flex; align-items: center; justify-content: center;
  border-left: 1px solid #d0cfd0;
  border-right: 1px solid #d0cfd0;
}
.filtercell svg { width: 22px; height: 26px; }
.zoomic { width: 20px; height: 20px; flex: none; }
.filtercell + .zoomic { margin-left: 10px; }
.pct { margin: 0 16px; font-size: 17px; }
.pct + .zoomic { margin-right: 14px; }

.sidetrim {
  flex: none;
  width: 36px;
  margin-left: 5px;
  margin-top: 5px;
  display: flex;
  flex-direction: column;
  gap: 6px;
}
.trimgroup {
  height: 120px;
  display: flex;
  flex-direction: column;
  align-items: center;
  gap: 12px;
  padding-top: 3px;
  border: 1px solid #d4d3d4;
  border-radius: 6px;
}
.trimgroup svg { width: 24px; height: 22px; flex: none; }
.grip { display: block; width: 28px; height: 5px; flex: none; background: #f2f2f2; border-bottom: 2px solid #9a9a9a; }

.statusbar {
  flex: none;
  height: 48px;
  display: flex;
  align-items: center;
  padding-left: 6px;
  font-size: 19.500px;
  font-weight: 700;
  color: #454545;
  white-space: nowrap;
}
.statusright { margin-left: auto; display: flex; align-items: center; height: 100%; margin-right: 478px; font-size: 16.500px; font-weight: 400; }
.autosave { height: 38px; display: flex; align-items: center; padding: 0 12px 0 16px; border-left: 1px solid #a8a8a8; border-right: 1px solid #a8a8a8; color: #333; }
.romeo { display: flex; align-items: center; padding-left: 12px; color: #666; width: 108px; font-size: 17px; }
.gdot { width: 11px; height: 11px; border-radius: 50%; background: #4f9c4f; margin-right: 11px; }
.endmark { display: block; width: 3px; height: 26px; border-right: 2px solid #a8a8a8; }

.dock {
  position: absolute;
  left: 620px;
  bottom: 0;
  width: 1160px;
  height: 105px;
  display: flex;
  align-items: flex-start;
  padding-left: 5px;
  background: #3b77bf;
  border-top: 1px solid #5d88bd;
}
.slot {
  position: relative;
  flex: none;
  width: 85.500px;
  height: 100px;
  display: flex;
  justify-content: center;
  align-items: center;
}
.slot svg { display: block; flex: none; }
.d-finder { width: 65px; height: 62px; }
.d-round { width: 70px; height: 72px; }
.d-mouse { width: 79px; height: 79px; }
.d-movie { width: 78px; height: 76px; }
.d-xcode { width: 78px; height: 80px; }
.d-term { width: 70px; height: 60px; }
.d-prefs { width: 70px; height: 66px; }
.d-xmind { width: 74px; height: 74px; }
.d-doc { width: 56px; height: 76px; margin-left: 12px; }
.d-trash { width: 58px; height: 76px; }
.slot.on::after {
  content: "";
  position: absolute;
  bottom: 0;
  left: 50%;
  width: 5px;
  height: 5px;
  margin-left: -2px;
  border-radius: 50%;
  background: #10274f;
}
.dockdivider { display: block; flex: none; width: 2px; height: 76px; margin: 14px 13px 0 20px; background: #2a5a96; }
.execlabel { font: bold 12px "Liberation Mono", monospace; fill: #3fa84a; }
```
